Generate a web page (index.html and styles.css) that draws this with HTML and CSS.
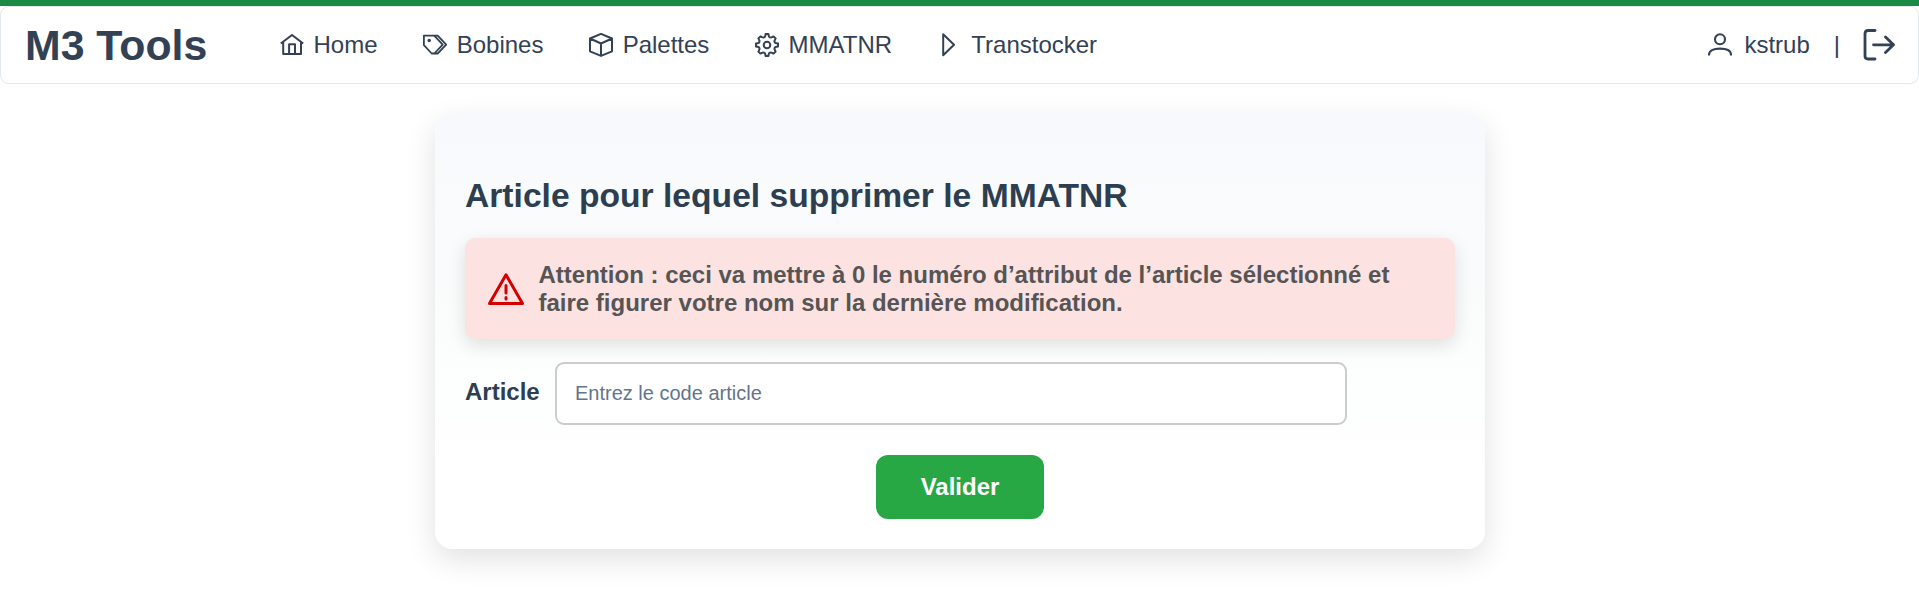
FILE: index.html
```html
<!DOCTYPE html>
<html lang="fr">
<head>
<meta charset="utf-8">
<title>M3 Tools</title>
<link rel="stylesheet" href="styles.css">
</head>
<body>
<header class="navbar">
  <a class="brand">M3 Tools</a>
  <nav class="menu">
    <a class="item"><svg class="icon" viewBox="0 0 24 24"><path d="M.8 10.500 12 2l11.200 8.500M3.200 9.200V21.100H21V9.200M9.100 21.100V11.300H15V21.100"/></svg><span>Home</span></a>
    <a class="item"><svg class="icon thin" viewBox="0 0 24 24"><path d="M.9 2.600H11.200L19.700 11.700 11.300 20.500H8.700L.9 12.200ZM11.200 2.600H14.700L23.200 11.700 14.700 20.500H11.300"/><circle class="fill" cx="6.200" cy="7.500" r="1.700"/></svg><span>Bobines</span></a>
    <a class="item"><svg class="icon" viewBox="0 0 24 24"><path d="M12 .9 23 5.500V18.300L12 22.900 1 18.300V5.500ZM1 5.500 12 10.500 23 5.500M12 10.500V22.900"/></svg><span>Palettes</span></a>
    <a class="item"><svg class="icon" viewBox="0 0 24 24"><path d="M10.600 1H13.400L13.900 3.600Q15.500 5.200 17.300 4L18.600 3.400 20.600 5.400 20 6.700Q18.800 8.500 20.400 10.100L23 10.600V13.400L20.400 13.900Q18.800 15.500 20 17.300L20.600 18.600 18.600 20.600 17.300 20Q15.500 18.800 13.900 20.400L13.400 23H10.600L10.100 20.400Q8.500 18.800 6.700 20L5.400 20.600 3.400 18.600 4 17.300Q5.200 15.500 3.600 13.900L1 13.400V10.600L3.600 10.100Q5.200 8.500 4 6.700L3.400 5.400 5.400 3.400 6.700 4Q8.500 5.200 10.100 3.600Z"/><circle cx="12" cy="12" r="3.300"/></svg><span>MMATNR</span></a>
    <a class="item"><svg class="icon" viewBox="0 0 24 24"><path d="M5.200 1.300V22.300L16 11.800Z"/></svg><span>Transtocker</span></a>
  </nav>
  <div class="account">
    <a class="item"><svg class="icon user" viewBox="0 0 24 24"><circle cx="12" cy="6.200" r="5"/><path d="M1 22.500V21.500C1 18 5 15.600 12 15.600S23 18 23 21.500V22.500"/></svg><span>kstrub</span></a>
    <span class="divider">|</span>
    <svg class="logout" viewBox="0 0 32 32"><path d="M12 1.500H5Q2 1.500 2 4.500V27Q2 30 5 30H12M10.500 15.800H30.500M22.500 8 30.500 15.800 22.500 23.600"/></svg>
  </div>
</header>
<main class="card">
  <h1 class="title">Article pour lequel supprimer le MMATNR</h1>
  <div class="alert">
    <svg class="warning" viewBox="0 0 36 36"><path d="M18 3.800 34.500 32.500H1.500Z"/><path class="mark" d="M18 14.500V22M18 26.600V28"/></svg>
    <p class="message">Attention : ceci va mettre à 0 le numéro d’attribut de l’article sélectionné et faire figurer votre nom sur la dernière modification.</p>
  </div>
  <form class="form">
    <div class="field">
      <label class="label" for="article">Article</label>
      <input class="input" id="article" type="text" placeholder="Entrez le code article">
    </div>
    <button class="submit" type="button">Valider</button>
  </form>
</main>
</body>
</html>
```
FILE: styles.css
```css
* { box-sizing: border-box; }
html { background: #fff; }
body {
  min-height: 599px;
  margin: 0;
  border-top: 6px solid #198a44;
  background: #fff;
  color: #334155;
  font: 24px "Liberation Sans", Arial, sans-serif;
}
.navbar {
  display: flex;
  align-items: center;
  height: 78px;
  padding: 0 23px;
  border: 1px solid #e2e8f0;
  border-radius: 9px;
}
.brand { width: 256px; padding-left: 1px; font-size: 42.8px; font-weight: 700; }
.menu { display: flex; gap: 45.7px; }
.item { display: flex; align-items: center; gap: 9.5px; }
.icon { width: 24px; height: 24px; fill: none; stroke: currentColor; stroke-width: 2; stroke-linejoin: round; }
.icon.thin { stroke-width: 1.8; }
.icon .fill { fill: currentColor; stroke: none; }
.account { display: flex; align-items: center; margin-left: auto; }
.account .item { gap: 12px; }
.icon.user { stroke-width: 2.1; }
.divider { margin: 0 23px 0 24px; }
.logout { width: 32px; height: 32px; fill: none; stroke: currentColor; stroke-width: 2.8; stroke-linecap: round; stroke-linejoin: round; }
.card {
  width: 1050px;
  height: 435px;
  margin: 30px 0 0 435px;
  padding: 62px 30px 30px;
  border-radius: 18px;
  background: linear-gradient(#f8f9fc, #fafcfc 40%, #fff 80%);
  box-shadow: 0 10px 30px rgba(0, 0, 0, .12);
}
.title { height: 62px; margin: 0; color: #2c3e50; font-size: 33.6px; line-height: 40px; letter-spacing: .02px; }
.alert {
  display: flex;
  align-items: center;
  gap: 15px;
  height: 101px;
  padding: 0 22px 0 22.500px;
  border-radius: 10px;
  background: #fde2e2;
  box-shadow: 0 6px 18px rgba(0, 0, 0, .12);
}
.warning { flex: none; width: 36px; height: 36px; fill: none; stroke: #d40000; stroke-width: 3; stroke-linejoin: round; }
.mark { stroke-linecap: round; }
.message { margin: 0; color: #555; font-weight: 700; line-height: 28px; }
.form { display: flex; flex-direction: column; align-items: center; gap: 30px; margin-top: 23px; }
.field { display: flex; align-items: center; align-self: flex-start; }
.label { width: 90px; padding-bottom: 4px; color: #2c3e50; font-weight: 700; }
.input {
  width: 792px;
  height: 63px;
  padding: 0 18px;
  border: 2px solid #ccc;
  border-radius: 9px;
  background: #fff;
  font: 20px "Liberation Sans", Arial, sans-serif;
}
.input::placeholder { color: #64748b; }
.submit {
  width: 168px;
  height: 64px;
  border: 0;
  border-radius: 12px;
  background: #28a745;
  color: #fff;
  font: 700 24px "Liberation Sans", Arial, sans-serif;
}
```
